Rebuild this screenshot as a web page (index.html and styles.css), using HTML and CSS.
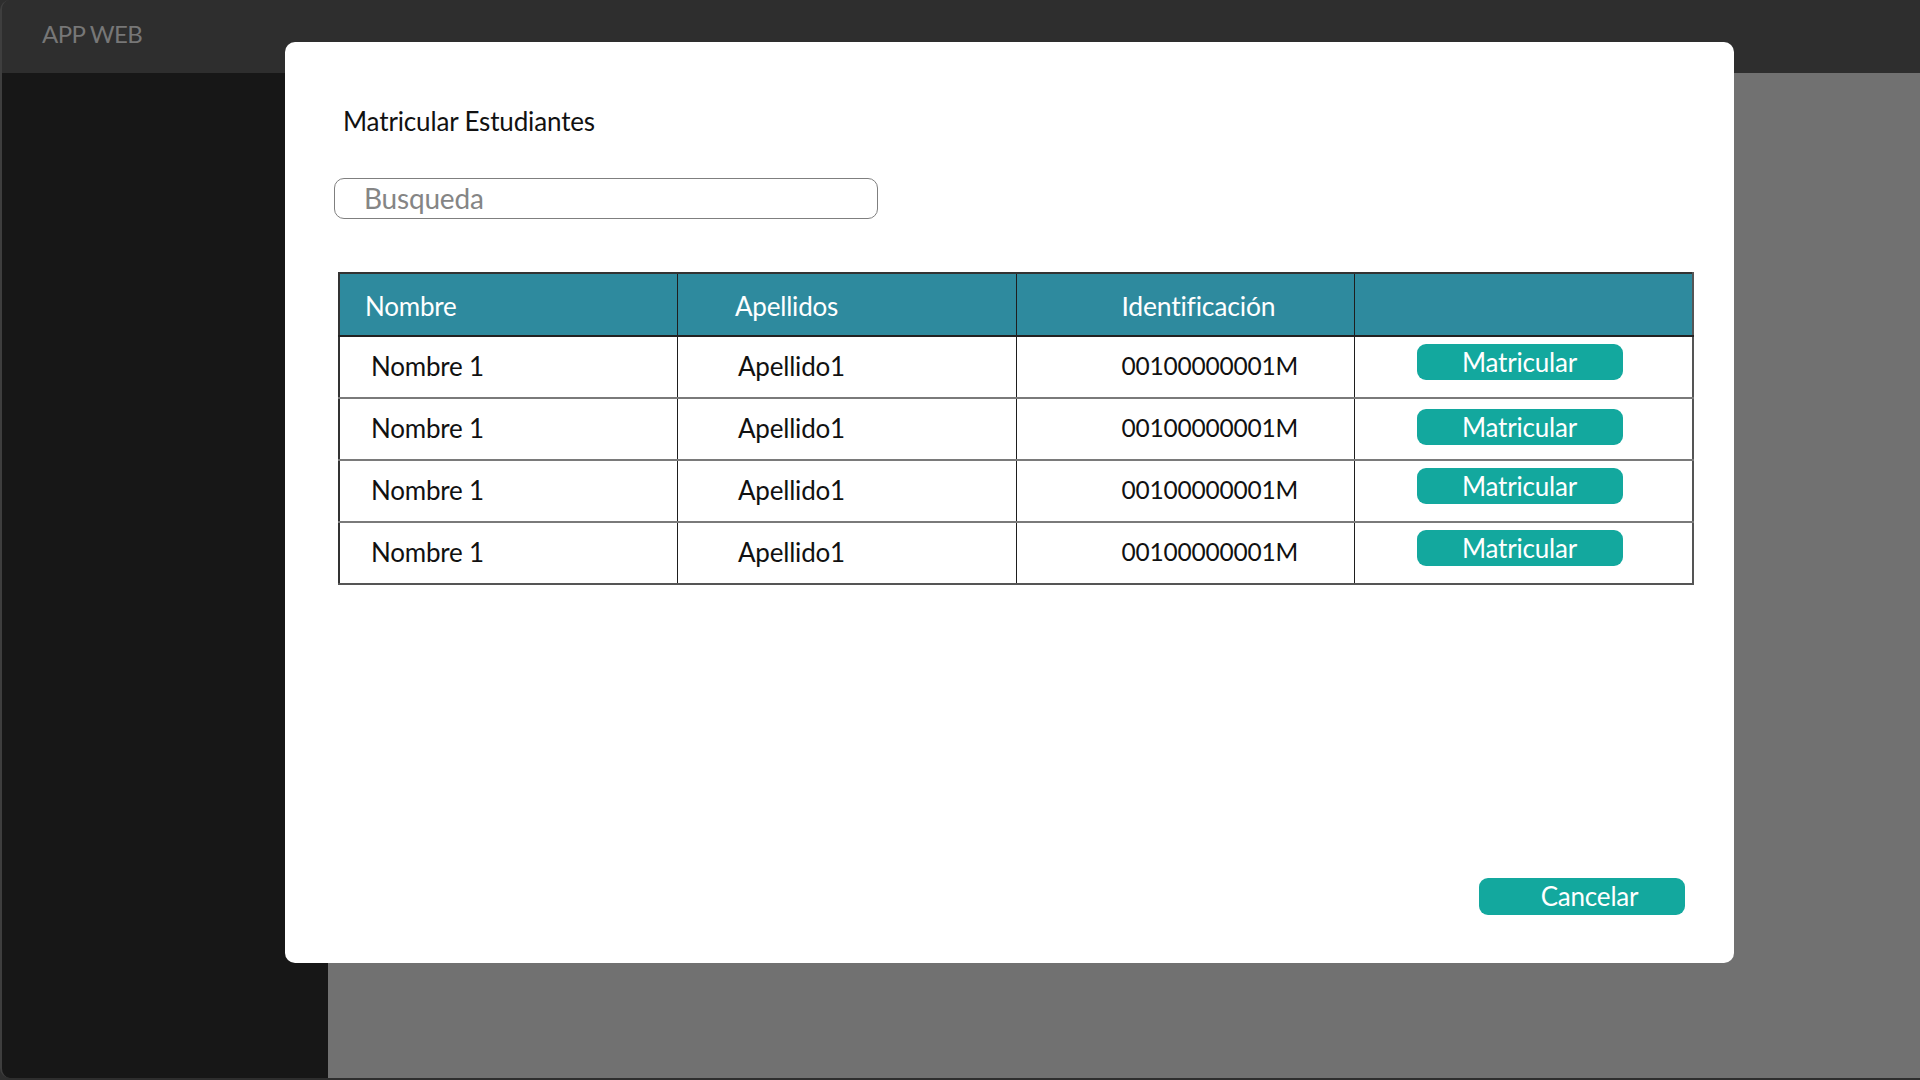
FILE: index.html
```html
<!DOCTYPE html>
<html lang="es">
<head>
<meta charset="utf-8">
<title>APP WEB</title>
<link rel="stylesheet" href="styles.css">
</head>
<body>
<div class="frame">
  <header class="topbar"><span class="brand">APP WEB</span></header>
  <aside class="sidebar"></aside>
  <main class="content"></main>
</div>

<div class="modal">
  <h1 class="modal-title">Matricular Estudiantes</h1>
  <div class="search"><input class="search-input" type="text" placeholder="Busqueda"></div>
  <table class="grid">
    <thead>
      <tr>
        <th class="c1">Nombre</th>
        <th class="c2">Apellidos</th>
        <th class="c3">Identificación</th>
        <th class="c4"></th>
      </tr>
    </thead>
    <tbody>
      <tr>
        <td class="c1">Nombre 1</td>
        <td class="c2">Apellido1</td>
        <td class="c3">00100000001M</td>
        <td class="c4"><button class="btn">Matricular</button></td>
      </tr>
      <tr>
        <td class="c1">Nombre 1</td>
        <td class="c2">Apellido1</td>
        <td class="c3">00100000001M</td>
        <td class="c4 r2"><button class="btn">Matricular</button></td>
      </tr>
      <tr>
        <td class="c1">Nombre 1</td>
        <td class="c2">Apellido1</td>
        <td class="c3">00100000001M</td>
        <td class="c4"><button class="btn">Matricular</button></td>
      </tr>
      <tr>
        <td class="c1">Nombre 1</td>
        <td class="c2">Apellido1</td>
        <td class="c3">00100000001M</td>
        <td class="c4"><button class="btn">Matricular</button></td>
      </tr>
    </tbody>
  </table>
  <button class="btn btn-cancel">Cancelar</button>
</div>
</body>
</html>
```
FILE: styles.css
```css
* { box-sizing: border-box; }
html, body { margin: 0; padding: 0; }
body {
  width: 1920px;
  height: 1080px;
  background: #2e2e2e;
  font-family: Lato, "Open Sans", sans-serif;
  overflow: hidden;
}
.frame {
  height: 1078px;
  display: grid;
  grid-template-columns: 326px 1fr;
  grid-template-rows: 73px 1fr;
  border-left: 2px solid #3e3e3e;
  border-radius: 10px 0 0 10px;
  overflow: hidden;
}
.topbar {
  grid-column: 1 / 3;
  background: #2e2e2e;
  display: flex;
  align-items: center;
  padding-left: 40px;
}
.brand {
  color: #777777;
  font-size: 24px;
  letter-spacing: -0.6px;
  margin-top: -6px;
}
.sidebar { background: #171717; }
.content { background: #717171; }

.modal {
  position: absolute;
  left: 285px;
  top: 42px;
  width: 1449px;
  height: 921px;
  background: #ffffff;
  border-radius: 10px;
  padding: 63px 42px 48px 49px;
  display: flex;
  flex-direction: column;
}
.modal-title {
  margin: 0 0 41px 9px;
  font-size: 26px;
  line-height: 32px;
  font-weight: 400;
  color: #111111;
  letter-spacing: -0.15px;
}
.search { width: 544px; }
.search-input {
  width: 100%;
  height: 41px;
  border: 1px solid #7f7f7f;
  border-radius: 10px;
  padding: 0 0 2px 29px;
  font-family: inherit;
  font-size: 28px;
  letter-spacing: -0.2px;
  color: #333;
  background: #fff;
  outline: none;
}
.search-input::placeholder { color: #858585; }

.grid {
  margin: 53px 0 0 4px;
  width: 1356px;
  border-collapse: collapse;
  table-layout: fixed;
  border: 2px solid #555555;
  border-left-color: #333;
  border-top-color: #333;
}
.grid th, .grid td {
  text-align: left;
  font-weight: 400;
  font-size: 26px;
  letter-spacing: -0.2px;
  padding: 0;
  border-right: 1px solid #1e1e1e;
  vertical-align: middle;
}
.grid thead tr {
  height: 63px;
  background: #2e8a9e;
  border-bottom: 2px solid #222;
}
.grid th { color: #ffffff; padding-top: 3px; }
.grid th.c3 { font-size: 26.5px; }
.grid tbody tr { height: 62px; border-bottom: 2px solid #7a7a7a; }
.grid tbody tr:last-child { border-bottom: 0; }
.grid td { color: #111111; padding-bottom: 3px; }
.grid td.c3 { font-size: 24.5px; }
.grid th.c1 { padding-left: 25px; }
.grid td.c1 { padding-left: 31px; }
.grid th.c2 { padding-left: 57px; }
.grid td.c2 { padding-left: 60px; }
.grid .c3 { padding-left: 105px; }
.grid .c4 {
  border-right: 0;
  text-align: center;
  vertical-align: top;
  padding-top: 7px;
  padding-right: 8px;
  padding-bottom: 0;
}
.grid .c4.r2 { padding-top: 10px; }

.btn {
  display: inline-block;
  width: 206px;
  height: 36px;
  border: 0;
  border-radius: 9px;
  background: #13a89e;
  color: #ffffff;
  font-family: inherit;
  font-size: 26px;
  letter-spacing: -0.2px;
  line-height: 36px;
  padding: 0 0 2px 0;
  cursor: pointer;
}
.btn-cancel {
  margin-top: auto;
  align-self: flex-end;
  margin-right: 7px;
  height: 37px;
  padding-left: 15px;
}
```
